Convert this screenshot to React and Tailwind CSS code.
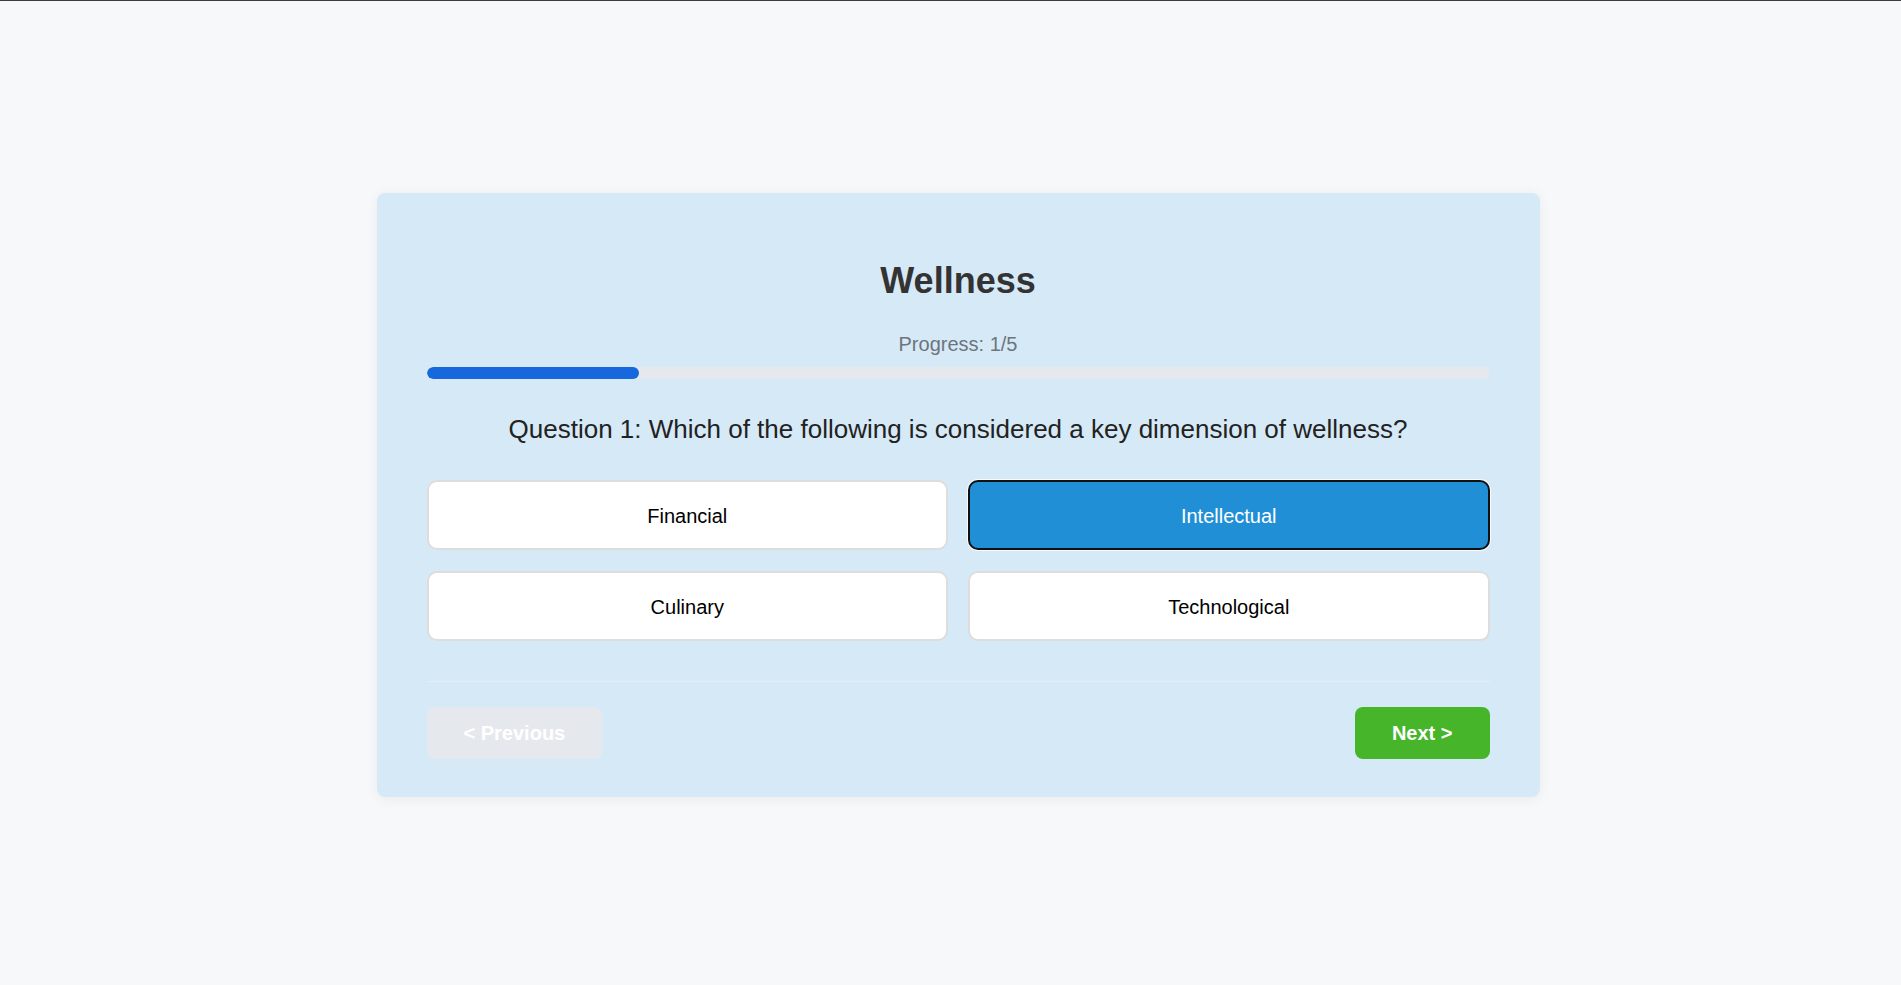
import React, { useState } from 'react'

const options = ['Financial', 'Intellectual', 'Culinary', 'Technological']

export default function App() {
  const [selected, setSelected] = useState('Intellectual')
  const current = 1
  const total = 5

  return (
    <div
      className="min-h-screen bg-[#f7f8fa] border-t border-[#3c3c3c] flex justify-center pl-[15px] pt-[192px]"
      style={{ fontFamily: '"Liberation Sans", Arial, sans-serif' }}
    >
      <div className="w-[1163px] h-fit bg-[#d6e9f7] rounded-lg shadow-[0_2px_14px_rgba(0,0,0,0.06)] px-[50px] pt-[67px] pb-[38px]">
        <h2 className="text-center text-[36px] leading-[41px] font-bold text-[#333]">Wellness</h2>

        <p className="mt-[32px] text-center text-[20px] leading-[23px] text-[#6c757d]">
          Progress: {current}/{total}
        </p>
        <div className="mt-[11px] h-[12px] rounded-full bg-[#e5e9ee] overflow-hidden">
          <div className="h-full rounded-full bg-[#1668dc]" style={{ width: `${(current / total) * 100}%` }} />
        </div>

        <p className="mt-[35px] text-center text-[26px] leading-[30px] text-[#222]">
          Question 1: Which of the following is considered a key dimension of wellness?
        </p>

        <div className="mt-[36px] grid grid-cols-2 gap-x-[20px] gap-y-[21px]">
          {options.map((opt) => {
            const active = selected === opt
            return (
              <button
                key={opt}
                onClick={() => setSelected(opt)}
                className={
                  active
                    ? 'h-[70px] pt-[2px] rounded-[10px] border-2 border-[#111] bg-[#208fd5] text-white text-[20px] shadow-[0_0_0_1px_rgba(255,255,255,0.8)]'
                    : 'h-[70px] pt-[2px] rounded-[10px] border-2 border-[#dddddd] bg-white text-black text-[20px]'
                }
              >
                {opt}
              </button>
            )
          })}
        </div>

        <div className="mt-[40px] border-t border-[#e2eef8] pt-[25px] flex justify-between">
          <button disabled className="h-[52px] px-[37px] rounded-lg bg-[#e5e9ee] text-white text-[20px] font-bold">
            &lt; Previous
          </button>
          <button className="h-[52px] px-[37px] rounded-lg bg-[#46b52a] text-white text-[20px] font-bold">
            Next &gt;
          </button>
        </div>
      </div>
    </div>
  )
}
